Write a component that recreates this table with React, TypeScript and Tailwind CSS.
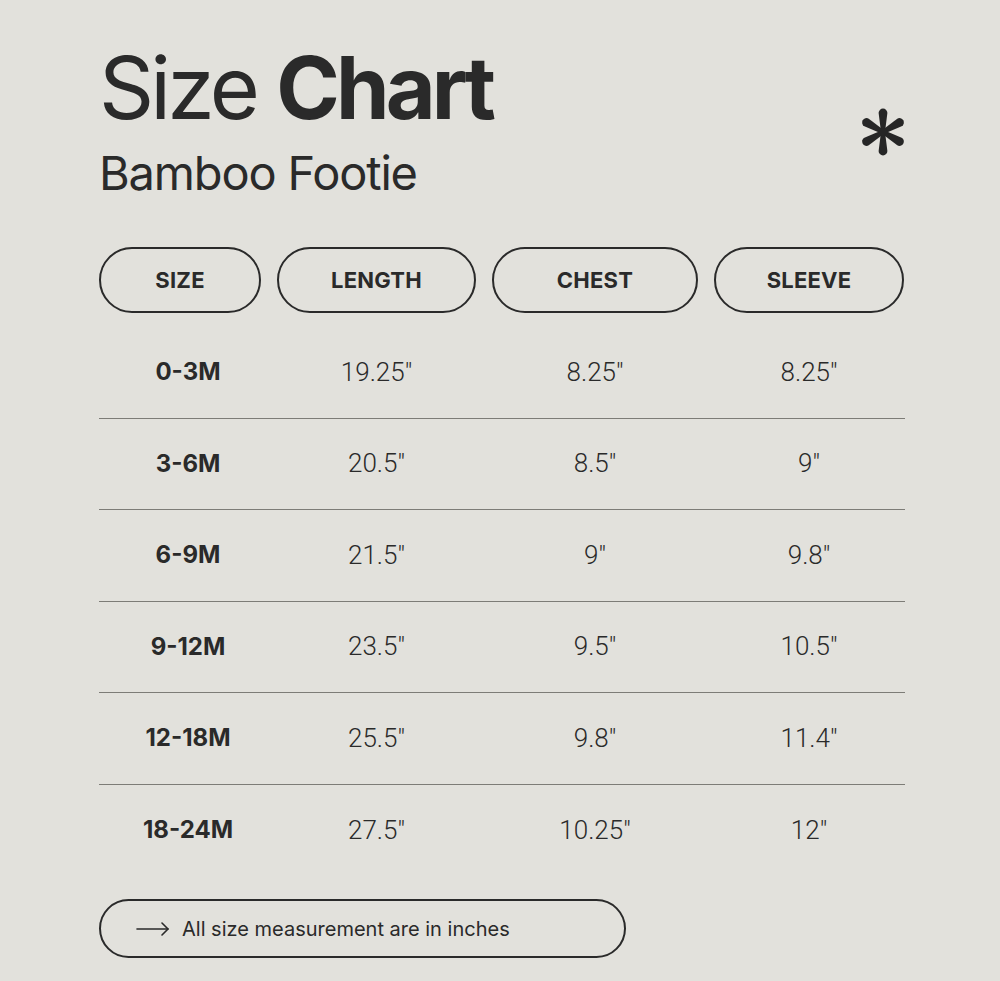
import React from "react";

const rows = [
  ["0-3M", '19.25"', '8.25"', '8.25"'],
  ["3-6M", '20.5"', '8.5"', '9"'],
  ["6-9M", '21.5"', '9"', '9.8"'],
  ["9-12M", '23.5"', '9.5"', '10.5"'],
  ["12-18M", '25.5"', '9.8"', '11.4"'],
  ["18-24M", '27.5"', '10.25"', '12"'],
];

const heads = ["SIZE", "LENGTH", "CHEST", "SLEEVE"];

const Asterisk = () => (
  <svg width="46" height="48" viewBox="0 0 46 48" className="text-[#262626]">
    <g fill="currentColor">
      {[0, 60, 120, 180, 240, 300].map((a) => (
        <path key={a} transform={`rotate(${a} 23 24)`} d="M21 24 L18.6 5 a4.4 4.4 0 0 1 8.8 0 L25 24 z" />
      ))}
      <circle cx="23" cy="24" r="3.4" />
    </g>
  </svg>
);

export default function App() {
  return (
    <div className="min-h-[981px] w-[1000px] bg-[#e2e1dc] text-[#2a2a2a] font-['Inter',sans-serif]">
      <div className="px-[99px] pt-[45px]">
        {/* Heading */}
        <div className="flex justify-between items-start">
          <div>
            <h1 className="text-[86px] leading-none tracking-[-0.045em]">
              <span className="font-normal">Size </span>
              <span className="font-bold">Chart</span>
            </h1>
            <p className="text-[47px] leading-none mt-[18px] tracking-[-0.025em]">Bamboo Footie</p>
          </div>
          <div className="mt-[63px] -mr-[5px]">
            <Asterisk />
          </div>
        </div>

        {/* Table */}
        <div className="mt-[51px] grid grid-cols-[162px_199px_206px_190px] gap-x-4 w-[806px]">
          {heads.map((h) => (
            <div
              key={h}
              className="h-[66px] rounded-full border-2 border-[#2a2a2a] flex items-center justify-center text-[22px] font-bold tracking-[0.01em]"
            >
              {h}
            </div>
          ))}
        </div>

        <div className="mt-[14px] w-[806px]">
          {rows.map((r, i) => (
            <div
              key={r[0]}
              className={
                "grid grid-cols-[162px_199px_206px_190px] gap-x-4 h-[91.5px] items-center " +
                (i < rows.length - 1 ? "border-b-[1.5px] border-[#7d7c77]" : "")
              }
            >
              <div className="text-center pl-4 text-[24px] font-bold">{r[0]}</div>
              {r.slice(1).map((v, j) => (
                <div
                  key={j}
                  className="text-center text-[26px] font-['Roboto',sans-serif] font-light"
                >
                  {v}
                </div>
              ))}
            </div>
          ))}
        </div>

        {/* Footer note */}
        <div className="mt-[23px] w-[527px] h-[59px] rounded-full border-2 border-[#2a2a2a] flex items-center pl-[35px] gap-3">
          <svg width="34" height="14" viewBox="0 0 34 14" fill="none" stroke="#2a2a2a" strokeWidth="1.6" strokeLinecap="round" strokeLinejoin="round">
            <line x1="1" y1="7" x2="32" y2="7" />
            <polyline points="26,1 32,7 26,13" />
          </svg>
          <span className="text-[20px] font-['Inter',sans-serif]">All size measurement are in inches</span>
        </div>
      </div>
    </div>
  );
}
